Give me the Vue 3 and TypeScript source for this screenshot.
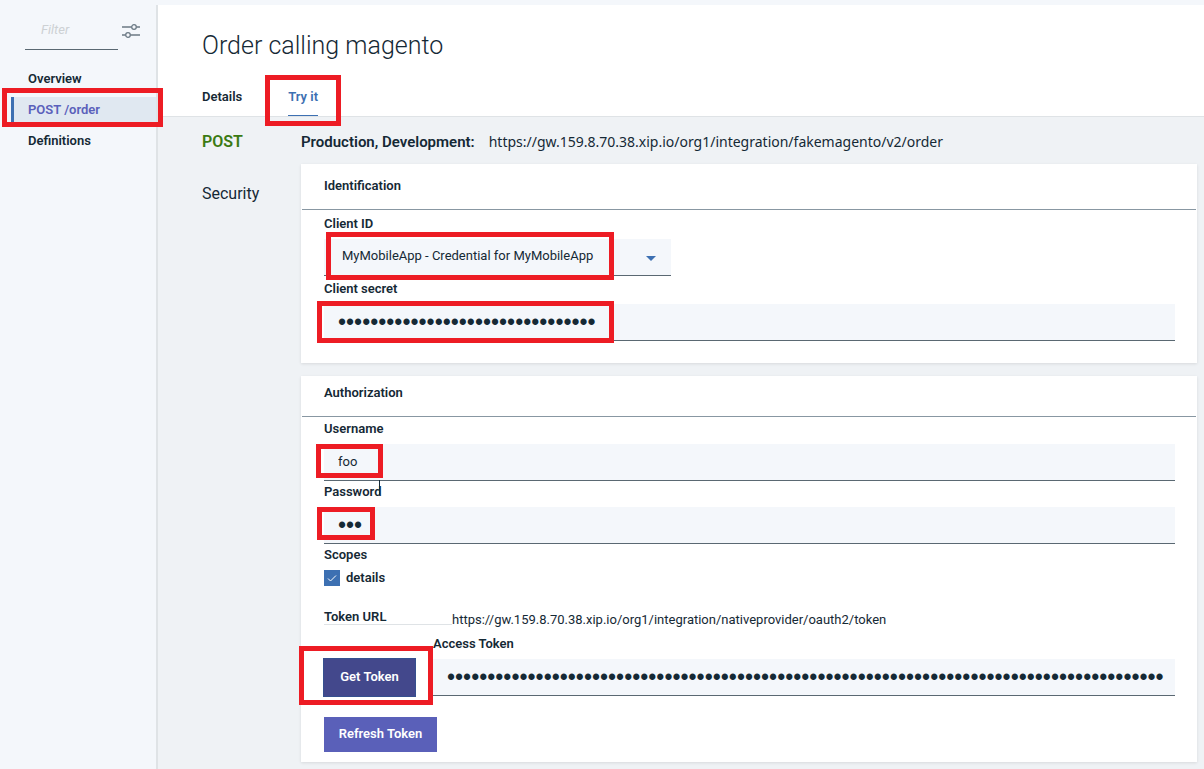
<script setup lang="ts">
import { ref } from 'vue'

interface NavItem {
  label: string
  active: boolean
}

const navItems: NavItem[] = [
  { label: 'Overview', active: false },
  { label: 'POST /order', active: true },
  { label: 'Definitions', active: false },
]

const filter = ref('')
const credential = ref('MyMobileApp - Credential for MyMobileApp')
const clientSecret = ref('x'.repeat(32))
const username = ref('foo')
const password = ref('bar')
const detailsScope = ref(true)
const accessToken = ref('x'.repeat(89))
</script>

<template>
  <div class="page">
    <aside class="sidebar">
      <div class="filter-row">
        <input v-model="filter" class="filter" type="text" placeholder="Filter" aria-label="Filter" />
        <button class="icon-button" type="button" aria-label="Filter settings">
          <svg width="18" height="14" viewBox="0 0 18 14" fill="none" stroke="#6b7984">
            <path d="M0 3H9.500M14.500 3H18M0 11H3.500M8.500 11H18" stroke-width="1.500" />
            <circle cx="12" cy="3" r="2.300" stroke-width="1.300" />
            <circle cx="6" cy="11" r="2.300" stroke-width="1.300" />
          </svg>
        </button>
      </div>
      <nav class="nav">
        <a v-for="item in navItems" :key="item.label" href="#" class="nav-item" :class="{ active: item.active }">
          {{ item.label }}
          <span v-if="item.active" class="mark mark-nav"></span>
        </a>
      </nav>
    </aside>

    <main class="main">
      <header class="header">
        <h1 class="title">Order calling magento</h1>
        <nav class="tabs">
          <a href="#" class="tab">Details</a>
          <a href="#" class="tab selected">Try it<span class="mark mark-tab"></span></a>
        </nav>
      </header>

      <div class="content">
        <div class="side-label method">POST</div>
        <div class="endpoint">
          <strong>Production, Development:</strong>
          <span class="endpoint-url">https://gw.159.8.70.38.xip.io/org1/integration/fakemagento/v2/order</span>
        </div>

        <div class="side-label security">Security</div>
        <div class="cards">
          <section class="card identification">
            <h2 class="card-title">Identification</h2>
            <div class="card-body">
              <label class="label" for="client-id">Client ID</label>
              <div class="host select-host">
                <select id="client-id" v-model="credential" class="field select">
                  <option>MyMobileApp - Credential for MyMobileApp</option>
                </select>
                <svg class="caret" width="10" height="5" viewBox="0 0 10 5"><path d="M0 0H10L5 5Z" fill="#3d70b2" /></svg>
                <span class="mark mark-client"></span>
              </div>
              <label class="label" for="client-secret">Client secret</label>
              <div class="host">
                <input id="client-secret" v-model="clientSecret" class="field secret" type="password" />
                <span class="mark mark-secret"></span>
              </div>
            </div>
          </section>

          <section class="card authorization">
            <h2 class="card-title">Authorization</h2>
            <div class="card-body">
              <label class="label" for="username">Username</label>
              <div class="host">
                <input id="username" v-model="username" class="field" type="text" />
                <span class="mark mark-user"></span>
              </div>
              <label class="label password-label" for="password">Password<span class="text-cursor"></span></label>
              <div class="host">
                <input id="password" v-model="password" class="field secret" type="password" />
                <span class="mark mark-password"></span>
              </div>
              <div class="label">Scopes</div>
              <label class="scope">
                <span class="check-host">
                  <input v-model="detailsScope" class="check" type="checkbox" />
                  <svg v-if="detailsScope" class="tick" width="16" height="16" viewBox="0 0 16 16" fill="none" stroke="#fff"><path d="M4 8.500L6.500 11L12 5.500" /></svg>
                </span>
                <span>details</span>
              </label>
              <div class="token-url">
                <span class="token-url-label">Token URL</span>
                <span class="token-url-value">https://gw.159.8.70.38.xip.io/org1/integration/nativeprovider/oauth2/token</span>
              </div>
              <div class="token-row">
                <div class="host">
                  <button class="button get-token" type="button">Get Token</button>
                  <span class="mark mark-token"></span>
                </div>
                <div class="access">
                  <label class="label" for="access-token">Access Token</label>
                  <input id="access-token" v-model="accessToken" class="field secret" type="password" />
                </div>
              </div>
              <button class="button refresh" type="button">Refresh Token</button>
            </div>
          </section>
        </div>
      </div>
    </main>
  </div>
</template>

<style>
body {
  margin: 0;
  background: #f4f7fb;
}
</style>

<style scoped>
.page,
.page * {
  box-sizing: border-box;
}
.page {
  display: grid;
  grid-template-columns: 158px 1fr;
  min-height: 100vh;
  padding-top: 5px;
  background: #f4f7fb;
  color: #152935;
  font-family: Roboto, "Liberation Sans", sans-serif;
  font-size: 13px;
  line-height: 16px;
}
input,
select,
button {
  margin: 0;
  font: inherit;
  color: inherit;
}
a {
  color: inherit;
  text-decoration: none;
}
.sidebar {
  border-right: 2px solid #dfe3e6;
}
.filter-row {
  display: flex;
  align-items: center;
  gap: 4px;
  padding: 5px 16px 0 25px;
}
.filter {
  flex: 1;
  min-width: 0;
  height: 40px;
  padding: 0 16px;
  border: 0;
  border-bottom: 1px solid #5a6872;
  border-radius: 0;
  background: transparent;
}
.filter::placeholder {
  color: #cdd1d4;
  font-style: italic;
  opacity: 1;
}
.icon-button {
  display: flex;
  padding: 2px 0 0;
  border: 0;
  background: none;
}
.nav {
  display: grid;
  gap: 5px;
  padding: 16px 0 0 11px;
}
.nav-item {
  position: relative;
  padding: 5px 0 5px 14px;
  border-left: 3px solid transparent;
  font-weight: 600;
}
.nav-item.active {
  border-color: #3d70b2;
  background: #e0e8f1;
  color: #5a60bb;
}
.main {
  display: flex;
  flex-direction: column;
  background: #eff2f5;
}
.header {
  padding: 24px 44px 0;
  border-bottom: 1px solid #dfe3e6;
  background: #fff;
}
.title {
  margin: 0;
  font-size: 25px;
  font-weight: 300;
  line-height: 34px;
}
.tabs {
  display: flex;
  gap: 46px;
  margin-top: 26px;
}
.tab {
  position: relative;
  padding-bottom: 10px;
  border-bottom: 1px solid transparent;
  font-weight: 600;
}
.tab.selected {
  border-color: #3d70b2;
  color: #3d70b2;
}
.content {
  display: grid;
  grid-template-columns: 99px 1fr;
  padding: 15px 7px 7px 44px;
}
.side-label {
  font-size: 16px;
  line-height: 20px;
}
.method {
  color: #3b7a12;
  font-weight: 600;
}
.security {
  padding-top: 32px;
}
.endpoint {
  display: flex;
  gap: 14px;
  font-size: 15px;
  line-height: 20px;
}
.endpoint strong {
  font-weight: 600;
}
.endpoint-url {
  font-family: "Noto Sans", sans-serif;
  font-size: 14px;
}
.cards {
  display: grid;
  gap: 13px;
  padding-top: 12px;
}
.card {
  border: 1px solid #fff;
  background: #fff;
  box-shadow: 0 1px 3px rgba(0, 0, 0, 0.1);
}
.card-title {
  margin: 0;
  padding: 13px 22px 15px;
  border-bottom: 1px solid #8897a2;
  font-size: 13px;
  font-weight: 600;
  line-height: 16px;
}
.authorization .card-title {
  padding-top: 8px;
}
.card-body {
  padding: 6px 21px 18px 22px;
}
.authorization .card-body {
  padding-top: 4px;
  padding-bottom: 9px;
}
.label {
  display: block;
  width: max-content;
  margin-bottom: 7px;
  font-weight: 600;
}
.host {
  position: relative;
  margin-bottom: 3px;
}
.select-host {
  width: 347px;
  margin-bottom: 5px;
}
.field {
  display: block;
  width: 100%;
  height: 37px;
  padding: 0 14px 2px;
  border: 0;
  border-bottom: 1px solid #5a6872;
  border-radius: 0;
  background: #f4f7fb;
}
.secret {
  padding: 0 8px 0 14px;
  font-family: "Liberation Sans", sans-serif;
  font-size: 23px;
}
.select {
  appearance: none;
  padding: 0 40px 2px 18px;
}
.caret {
  position: absolute;
  right: 15px;
  top: 17px;
}
.password-label {
  position: relative;
}
.text-cursor {
  position: absolute;
  right: 1px;
  top: -4px;
  width: 1px;
  height: 15px;
  background: #152935;
}
.scope {
  display: flex;
  gap: 6px;
  width: max-content;
  font-weight: 600;
}
.check-host {
  position: relative;
  width: 16px;
  height: 16px;
}
.check {
  display: block;
  width: 16px;
  height: 16px;
  appearance: none;
  background: #3d70b2;
}
.tick {
  position: absolute;
  inset: 0;
  pointer-events: none;
}
.token-url {
  display: flex;
  margin-top: 23px;
}
.token-url-label {
  width: 128px;
  height: 16px;
  border-bottom: 1px solid #dfe3e6;
  font-weight: 600;
}
.token-url-value {
  padding-top: 3px;
}
.token-row {
  display: flex;
  align-items: flex-end;
  gap: 18px;
  margin-top: 8px;
}
.token-row .host {
  margin: 0;
}
.access {
  flex: 1;
}
.button {
  display: block;
  padding: 0 0 2px;
  border: 0;
  border-radius: 0;
  color: #fff;
  font-weight: 600;
}
.get-token {
  width: 91px;
  height: 37px;
  background: #43488c;
  box-shadow: 0 0 0 1px #35508f;
}
.refresh {
  height: 35px;
  width: 113px;
  margin-top: 21px;
  background: #5a60b9;
}
.mark {
  position: absolute;
  z-index: 1;
  border: 5px solid #ed1c24;
  pointer-events: none;
}
.mark-nav {
  inset: -9px -7px -4px -12px;
}
.mark-tab {
  inset: -14px -23px -11px -23px;
}
.mark-client {
  inset: -7px 57px -4px 2px;
}
.mark-secret {
  top: -3px;
  bottom: -2px;
  left: -7px;
  width: 297px;
}
.mark-user {
  top: 0;
  bottom: 3px;
  left: -8px;
  width: 67px;
}
.mark-password {
  top: 0;
  bottom: 4px;
  left: -7px;
  width: 58px;
}
.mark-token {
  inset: -13px -18px -9px -25px;
}
</style>
